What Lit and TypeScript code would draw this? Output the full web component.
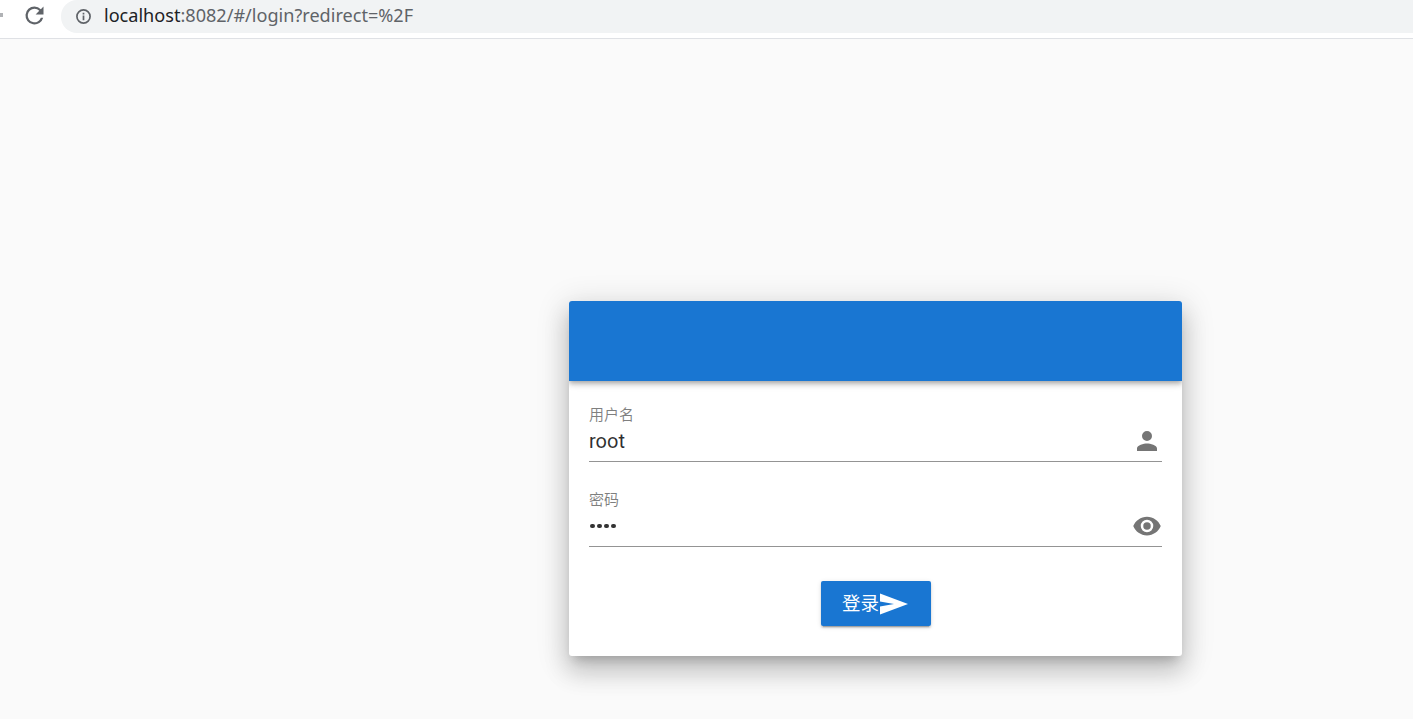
import {LitElement, html, css} from 'lit';
import {customElement} from 'lit/decorators.js';

@customElement('app-root')
export class AppRoot extends LitElement {
  static styles = css`
    :host {
      display: block;
      height: 719px;
      overflow: hidden;
      background: #fafafa;
      font-family: "Roboto", "Noto Sans CJK SC", sans-serif;
    }

    .toolbar {
      display: flex;
      align-items: flex-start;
      box-sizing: border-box;
      height: 39px;
      background: #fff;
      border-bottom: 1px solid #dfe1e5;
    }

    .back {
      width: 3px;
      height: 4px;
      margin-top: 13px;
      background: #b0b2b5;
    }

    .reload {
      flex: none;
      width: 27px;
      height: 27px;
      margin: 1.5px 13.5px 0 17.5px;
      fill: #5f6368;
    }

    .omnibox {
      display: flex;
      flex: 1;
      align-items: center;
      height: 33px;
      padding-left: 14px;
      background: #f1f3f4;
      border-radius: 16px 0 0 16px;
    }

    .info {
      width: 17px;
      height: 17px;
      margin-right: 12px;
      fill: #5f6368;
    }

    .url {
      margin-top: -3px;
      font-family: "Noto Sans", "Roboto", sans-serif;
      font-size: 18.1px;
      color: #5f6368;
    }

    .url b {
      font-weight: 400;
      color: #202124;
    }

    .page {
      padding: 262px 0 0 569px;
    }

    .card {
      width: 613px;
      height: 355px;
      overflow: hidden;
      background: #fff;
      border-radius: 3px;
      box-shadow: 0 8px 10px -5px rgba(0, 0, 0, 0.2), 0 16px 24px 2px rgba(0, 0, 0, 0.14), 0 6px 30px 5px rgba(0, 0, 0, 0.12);
    }

    .card-head {
      position: relative;
      height: 80px;
      background: #1976d2;
      box-shadow: 0 2px 4px -1px rgba(0, 0, 0, 0.2), 0 4px 5px rgba(0, 0, 0, 0.14), 0 1px 10px rgba(0, 0, 0, 0.12);
    }

    form {
      display: flex;
      flex-direction: column;
      padding: 25px 20px 0;
    }

    .field {
      display: flex;
      flex-direction: column;
      height: 55px;
      margin-bottom: 29px;
      border-bottom: 1px solid #949494;
    }

    .label {
      height: 18px;
      font-size: 15px;
      line-height: 18px;
      color: rgba(0, 0, 0, 0.5);
    }

    .value {
      display: flex;
      align-items: center;
      justify-content: space-between;
      height: 34px;
      font-size: 20px;
      color: rgba(0, 0, 0, 0.82);
    }

    .dots {
      display: flex;
      gap: 2.5px;
      padding-left: 1px;
    }

    .dots i {
      display: block;
      width: 4.5px;
      height: 4.5px;
      background: #333;
      border-radius: 50%;
    }

    .value svg {
      width: 30px;
      height: 30px;
      fill: rgba(0, 0, 0, 0.54);
    }

    .actions {
      display: flex;
      justify-content: center;
      margin-top: 5px;
    }

    button {
      display: flex;
      align-items: center;
      justify-content: center;
      width: 110px;
      height: 45px;
      padding: 0;
      font-family: inherit;
      font-size: 18.5px;
      color: #fff;
      background: #1976d2;
      border: none;
      border-radius: 2px;
      box-shadow: 0 3px 1px -2px rgba(0, 0, 0, 0.2), 0 2px 2px rgba(0, 0, 0, 0.14), 0 1px 5px rgba(0, 0, 0, 0.12);
    }

    button span {
      margin-top: -3px;
    }

    button svg {
      width: 30px;
      height: 26px;
      fill: #fff;
    }
  `;

  render() {
    return html`
      <div class="toolbar">
        <div class="back"></div>
        <svg class="reload" viewBox="0 0 24 24"><path d="M17.65 6.35A7.96 7.96 0 0 0 12 4a8 8 0 1 0 7.73 10h-2.08A6 6 0 1 1 12 6c1.66 0 3.14.69 4.22 1.78L13 11h7V4l-2.35 2.35z"/></svg>
        <div class="omnibox">
          <svg class="info" viewBox="0 0 16 16"><path fill-rule="evenodd" d="M8 1a7 7 0 1 0 0 14A7 7 0 0 0 8 1zm0 1.6a5.4 5.4 0 1 1 0 10.8A5.4 5.4 0 0 1 8 2.600zM7.200 7h1.600v4.500H7.200zM7.200 4.500h1.600v1.600H7.200z"/></svg>
          <span class="url"><b>localhost</b>:8082/#/login?redirect=%2F</span>
        </div>
      </div>
      <div class="page">
        <div class="card">
          <div class="card-head"></div>
          <form>
            <div class="field">
              <span class="label">用户名</span>
              <div class="value">
                <span>root</span>
                <svg viewBox="0 0 24 24"><path d="M12 12a4 4 0 1 0 0-8 4 4 0 0 0 0 8zm0 2c-2.670 0-8 1.340-8 4v2h16v-2c0-2.660-5.330-4-8-4z"/></svg>
              </div>
            </div>
            <div class="field">
              <span class="label">密码</span>
              <div class="value">
                <span class="dots"><i></i><i></i><i></i><i></i></span>
                <svg viewBox="0 0 24 24"><path d="M12 4.500C7 4.500 2.730 7.610 1 12c1.730 4.390 6 7.500 11 7.500s9.270-3.110 11-7.500c-1.730-4.390-6-7.500-11-7.500zM12 17a5 5 0 1 1 0-10 5 5 0 0 1 0 10zm0-8a3 3 0 1 0 0 6 3 3 0 0 0 0-6z"/></svg>
              </div>
            </div>
            <div class="actions">
              <button type="button">
                <span>登录</span>
                <svg viewBox="0 0 30 26"><path d="M1 2.500 29 13 1 23.500 1 15.500 15 13 1 10.500z"/></svg>
              </button>
            </div>
          </form>
        </div>
      </div>
    `;
  }
}
